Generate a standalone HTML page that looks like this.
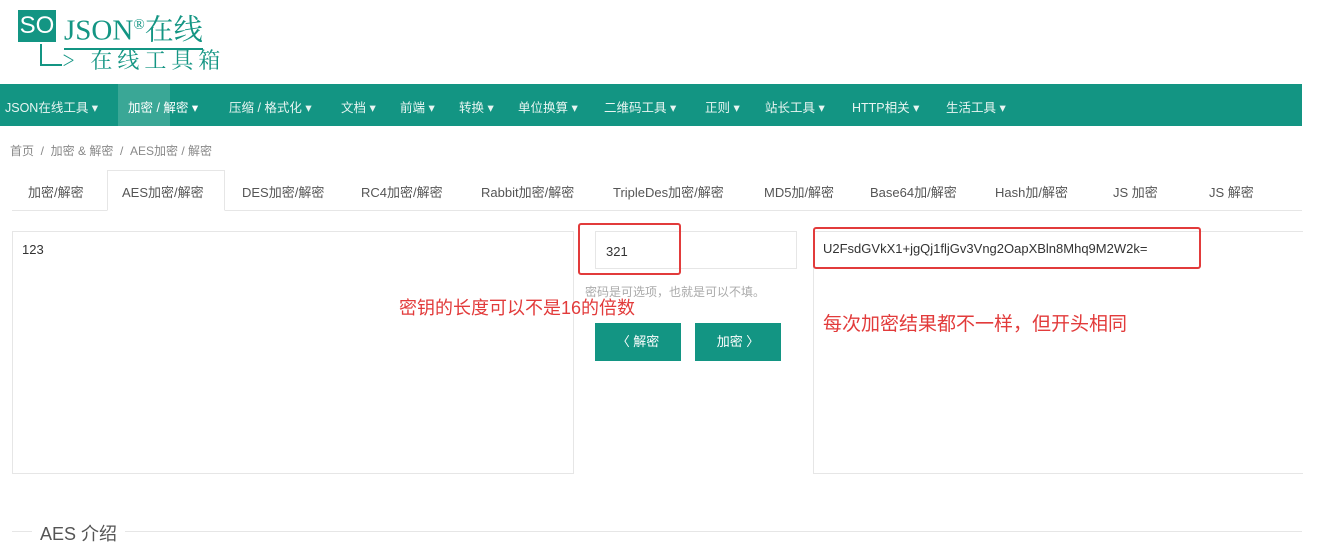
<!DOCTYPE html>
<html><head><meta charset="utf-8"><style>
*{margin:0;padding:0;box-sizing:border-box}
body{width:1318px;height:542px;background:#fff;position:relative;overflow:hidden;font-family:"Liberation Sans","Noto Sans CJK SC",sans-serif;color:#333}
.a{position:absolute}
.nav{left:0;top:84px;width:1302px;height:42px;background:#139583;color:#e8f5f2;font-size:12.5px}
.nav span{position:absolute;top:13px;white-space:nowrap}
.tabs span{position:absolute;top:182px;font-size:13px;color:#555;white-space:nowrap}
.red{border:2px solid #e23b3b;border-radius:3px}
.btn{background:#139583;color:#fff;font-size:13px;text-align:center;line-height:38px}
</style></head><body>
<div class="a" style="left:18px;top:10px;width:38px;height:32px;background:#139583;color:#fff;font-size:24px;line-height:32px;text-align:center">SO</div>
<div class="a" style="left:64px;top:8px;font-family:'Liberation Serif','Noto Serif CJK SC',serif;font-size:29px;color:#139583;line-height:34px;border-bottom:2px solid #139583;white-space:nowrap">JSON<sup style="font-size:15px">®</sup>在线</div>
<div class="a" style="left:40px;top:44px;width:2px;height:22px;background:#139583"></div>
<div class="a" style="left:40px;top:64px;width:22px;height:2px;background:#139583"></div>
<div class="a" style="left:62px;top:46px;font-family:'Noto Serif CJK SC',serif;font-size:22px;color:#139583;letter-spacing:5px;white-space:nowrap;line-height:28px">&gt; 在线工具箱</div>
<div class="a nav">
<div class="a" style="left:118px;top:0;width:52px;height:42px;background:#3aa796"></div>
<span style="left:5px">JSON在线工具 ▾</span><span style="left:128px;color:#fff">加密 / 解密 ▾</span><span style="left:229px">压缩 / 格式化 ▾</span><span style="left:341px">文档 ▾</span><span style="left:400px">前端 ▾</span><span style="left:459px">转换 ▾</span><span style="left:518px">单位换算 ▾</span><span style="left:604px">二维码工具 ▾</span><span style="left:705px">正则 ▾</span><span style="left:765px">站长工具 ▾</span><span style="left:852px">HTTP相关 ▾</span><span style="left:946px">生活工具 ▾</span>
</div>
<div class="a" style="left:10px;top:142px;font-size:12px;color:#888">首页 &nbsp;/ &nbsp;加密 &amp; 解密 &nbsp;/ &nbsp;AES加密 / 解密</div>
<div class="a" style="left:12px;top:210px;width:1290px;height:1px;background:#e6e6e6"></div>
<div class="a" style="left:107px;top:170px;width:118px;height:41px;border:1px solid #e6e6e6;border-bottom:1px solid #fff;background:#fff"></div>
<div class="tabs"><span style="left:28px">加密/解密</span><span style="left:122px">AES加密/解密</span><span style="left:242px">DES加密/解密</span><span style="left:361px">RC4加密/解密</span><span style="left:481px">Rabbit加密/解密</span><span style="left:613px">TripleDes加密/解密</span><span style="left:764px">MD5加/解密</span><span style="left:870px">Base64加/解密</span><span style="left:995px">Hash加/解密</span><span style="left:1113px">JS 加密</span><span style="left:1209px">JS 解密</span></div>
<div class="a" style="left:12px;top:231px;width:562px;height:243px;border:1px solid #e6e6e6"></div>
<div class="a" style="left:22px;top:242px;font-size:13px">123</div>
<div class="a" style="left:595px;top:231px;width:202px;height:38px;border:1px solid #e6e6e6"></div>
<div class="a" style="left:606px;top:244px;font-size:13px">321</div>
<div class="a red" style="left:578px;top:223px;width:103px;height:52px"></div>
<div class="a" style="left:585px;top:283px;font-size:12px;color:#aaa">密码是可选项，也就是可以不填。</div>
<div class="a" style="left:399px;top:294px;font-size:18px;color:#e23b3b">密钥的长度可以不是16的倍数</div>
<div class="a btn" style="left:595px;top:323px;width:86px;height:38px">〈 解密</div>
<div class="a btn" style="left:695px;top:323px;width:86px;height:38px">加密 〉</div>
<div class="a" style="left:813px;top:231px;width:490px;height:243px;border:1px solid #e6e6e6;border-right:none"></div>
<div class="a red" style="left:813px;top:227px;width:388px;height:42px"></div>
<div class="a" style="left:823px;top:241px;font-size:13px;color:#333">U2FsdGVkX1+jgQj1fljGv3Vng2OapXBln8Mhq9M2W2k=</div>
<div class="a" style="left:823px;top:309px;font-size:19px;color:#e23b3b">每次加密结果都不一样，但开头相同</div>
<div class="a" style="left:12px;top:531px;width:1290px;height:1px;background:#e6e6e6"></div>
<div class="a" style="left:32px;top:520px;padding:0 8px;background:#fff;font-size:18px;color:#555">AES 介绍</div>
</body></html>
